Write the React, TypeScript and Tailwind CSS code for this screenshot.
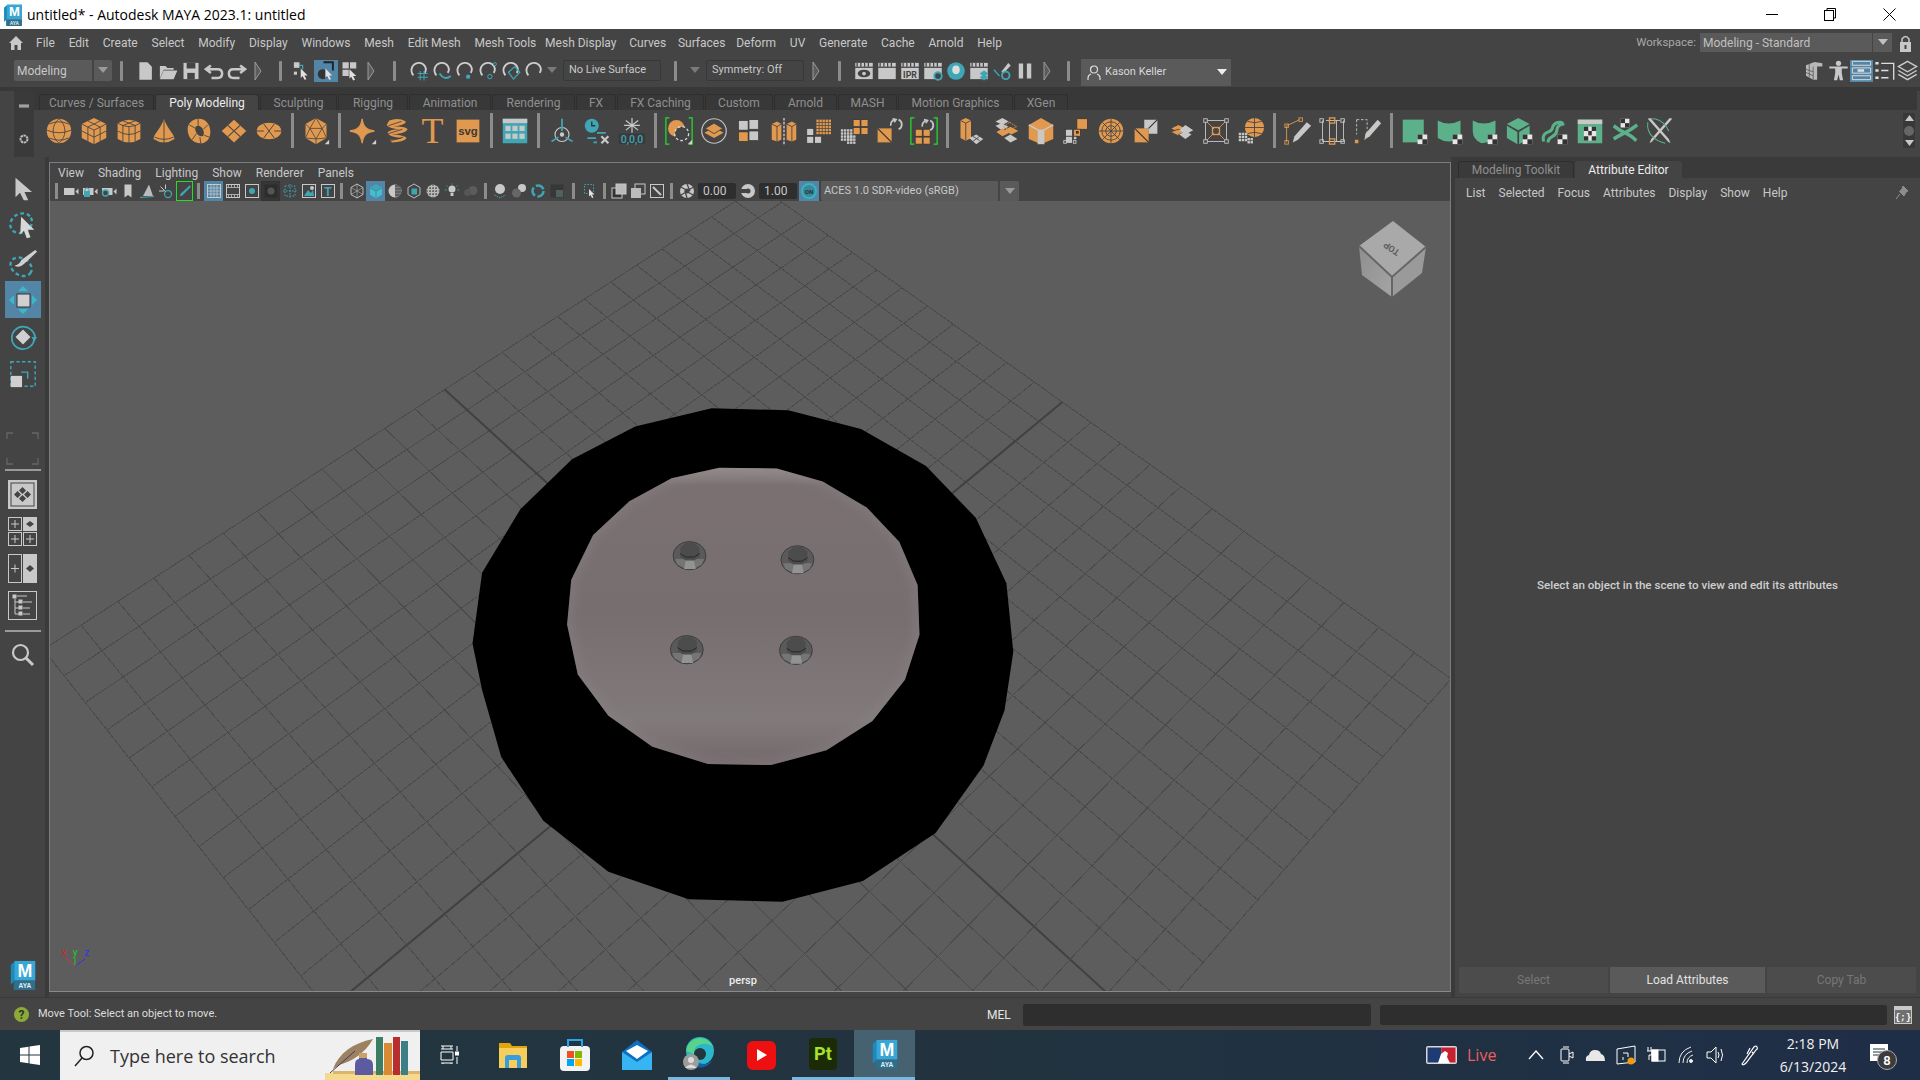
import React from "react";

const O = "#e0994f";
const D = "#444444";
const T = "#3fa6b6";
const G = "#c8c8c8";
const V = "#5cb18b";
const NG = "#22e02a";

const I = ({ s = 28, children }: { s?: number; children: React.ReactNode }) => (
  <svg width={s} height={s} viewBox="0 0 32 32" fill="none">{children}</svg>
);
const Corner = () => <path d="M31 31V26L26 31Z" fill="#d0d0d0" />;
const Brk = () => <path d="M5 1H1V31H5M27 1H31V31H27" stroke={NG} strokeWidth="1.4" />;
const Sq = ({ x, y, w, c = O }: { x: number; y: number; w: number; c?: string }) => <rect x={x} y={y} width={w} height={w} fill={c} stroke="#333" strokeWidth=".8" />;
const FineGrid = ({ x, y, n, c }: { x: number; y: number; n: number; c: string }) => (
  <g>{Array.from({ length: n * n }).map((_, i) => <rect key={i} x={x + (i % n) * 3.5} y={y + Math.floor(i / n) * 3.5} width="2.7" height="2.7" fill={c} />)}</g>
);
const Arrows = ({ x = 0, y = 0 }: { x?: number; y?: number }) => (
  <g transform={`translate(${x} ${y})`} stroke="#c8c8c8" strokeWidth="2"><path d="M3 9A6 6 0 0 1 8 2" /><path d="M12 2A6 6 0 0 1 12 13" /><path d="M5 1L9 2 7 5" /></g>
);
const Chk = ({ x, y }: { x: number; y: number }) => (
  <g transform={`translate(${x} ${y})`}><rect width="11" height="11" fill="#e6e6e6" /><rect width="5.5" height="5.5" fill="#333" /><rect x="5.5" y="5.5" width="5.5" height="5.5" fill="#333" /></g>
);

const shelfA: React.ReactNode[] = [
  <I key="a"><circle cx="16" cy="16" r="14" fill={O} /><path d="M5 8Q16 3 27 8M2 15Q16 21 30 15M5 24Q16 29 27 24M16 2C7 9 7 23 16 30M16 2C25 9 25 23 16 30" stroke={D} strokeWidth="1" /></I>,
  <I key="b"><path d="M16 1L30 8V24L16 31 2 24V8Z" fill={O} /><path d="M2 8L16 15 30 8M16 15V31M9 4.500L23 11.500M23 4.500L9 11.500M9 11.500V28M23 11.500V28M2 16L16 23 30 16" stroke={D} strokeWidth="1" /></I>,
  <I key="c"><path d="M3 7Q16 -1 29 7V25Q16 33 3 25Z" fill={O} /><path d="M3 7Q16 15 29 7M3 16Q16 24 29 16M16 11V30M9 10V28M23 10V28M8 4L24 10M24 4L8 10" stroke={D} strokeWidth="1" /></I>,
  <I key="d"><path d="M16 2C12 14 4 20 4 25Q16 33 28 25C28 20 20 14 16 2Z" fill={O} /><path d="M16 2V31M5 23Q16 28 27 23" stroke={D} strokeWidth="1" /></I>,
  <I key="e"><path fillRule="evenodd" d="M16 2C24 2 29 9 29 17 29 25 24 30 18 30 9 30 3 23 3 14 3 7 9 2 16 2ZM15 10C11 10 11 14 13 18 15 22 19 23 21 21 23 18 20 10 15 10Z" fill={O} /><path d="M5 9L12 13M15 2L15 10M26 9L21 14M22 21L28 23M13 19L8 26M17 23L18 30" stroke={D} strokeWidth="1" /></I>,
  <I key="f"><path d="M16 3L30 16 16 29 2 16Z" fill={O} /><path d="M9 9.500L23 22.500M23 9.500L9 22.500" stroke={D} strokeWidth="1.2" /></I>,
  <I key="g"><ellipse cx="16" cy="16" rx="14" ry="9.500" fill={O} /><path d="M2 16H10M22 16H30M10 8L22 24M22 8L10 24" stroke={D} strokeWidth="1.100" /></I>,
];
const shelfB = <I key="h"><path d="M16 1L28 8V24L16 31 4 24V8Z" fill={O} /><path d="M16 1L9 13 4 8M16 1L23 13 28 8M9 13H23L16 25ZM9 13L4 24M23 13L28 24M16 25V31M16 25L4 24M16 25L28 24" stroke={D} strokeWidth=".9" /><Corner /></I>;
const shelfC: React.ReactNode[] = [
  <I key="i"><path d="M15 2C16 11 20 15 29 16 20 17 16 21 15 30 14 21 10 17 1 16 10 15 14 11 15 2Z" fill={O} stroke={O} strokeWidth="1.500" /><Corner /></I>,
  <I key="j"><path d="M6 4Q16 0 25 5 25 9 10 11 24 10 27 14 25 19 9 20 22 20 26 24 22 29 9 29L7 26Q20 26 20 24 6 23 4 18 6 14 18 14 5 13 3 9Z" fill={O} /><path d="M5 10L20 5M5 19L21 14M8 27L22 23" stroke={D} strokeWidth="1" /></I>,
  <span key="k" className="font-['Liberation_Serif',serif] text-[36px] leading-[30px] text-[#e0994f]">T</span>,
  <I key="l"><rect x="3" y="3" width="26" height="26" fill={O} /><text x="16" y="21" textAnchor="middle" fontFamily="Liberation Sans" fontWeight="700" fontSize="13" fill="#3a3a3a">svg</text></I>,
];
const shelfD = <I key="m"><rect x="2" y="2" width="28" height="28" fill={T} /><rect x="2" y="2" width="28" height="5" fill={G} /><g fill={G}><rect x="5" y="10" width="6" height="6" /><rect x="13" y="10" width="6" height="6" /><rect x="21" y="10" width="6" height="6" /><rect x="5" y="19" width="6" height="6" /><rect x="13" y="19" width="6" height="6" /><rect x="21" y="19" width="6" height="6" /></g></I>;
const shelfE: React.ReactNode[] = [
  <I key="n"><circle cx="16" cy="20" r="8" stroke={G} strokeWidth="1.300" /><path d="M16 2V16M4 28L12 23M28 28L20 23" stroke={T} strokeWidth="2" /><circle cx="16" cy="20" r="2.500" fill={G} /></I>,
  <I key="o"><circle cx="10" cy="10" r="8" fill={T} /><path d="M10 5V10H14" stroke="#333" strokeWidth="1.500" /><path d="M16 18H26M5 24H15M12 29H16" stroke={T} strokeWidth="2" /><path d="M21 22L29 30M29 22L21 30" stroke={G} strokeWidth="2.500" /></I>,
  <I key="p"><path d="M16 1V18M9 4L23 15M23 4L9 15M7 9.500H25" stroke={G} strokeWidth="1.400" /><rect x="1" y="19" width="30" height="12" fill="#3a3a3a" /><text x="16" y="30" textAnchor="middle" fontFamily="Roboto" fontWeight="500" fontSize="12" fill={T}>0,0,0</text></I>,
];
const shelfF: React.ReactNode[] = [
  <I key="q"><Brk /><circle cx="13" cy="13" r="9.500" fill={O} /><circle cx="19" cy="19" r="8" fill="#444" stroke="#ddd" strokeWidth="1.500" strokeDasharray="3 2.500" /><Corner /></I>,
  <I key="r"><circle cx="16" cy="16" r="14" stroke="#c0c0c0" strokeWidth="1.400" /><path d="M16 12L27 18 16 24 5 18Z" fill={O} /><path d="M16 7L26 13 16 19 6 13Z" fill={O} stroke="#444" /></I>,
  <I key="s"><Sq x={4} y={17} w={11} /><Sq x={16} y={3} w={11} c={G} /><Sq x={16} y={16} w={11} c={G} /><Sq x={4} y={4} w={11} c={G} /></I>,
  <I key="t"><path d="M2 8L8 5 13 8V26L8 28 2 26Z" fill={O} /><path d="M19 8L25 5 30 8V26L25 28 19 26Z" fill={O} /><path d="M2 8L8 11 13 8M8 11V28M19 8L25 11 30 8M25 11V28" stroke="#444" /><path d="M16 1V31" stroke="#ddd" strokeWidth="1.400" strokeDasharray="3 1.500" /></I>,
  <I key="u"><Sq x={2} y={13} w={8} c={G} /><Sq x={11} y={22} w={8} c={G} /><Sq x={2} y={22} w={8} c={G} /><FineGrid x={13} y={3} n={5} c={O} /></I>,
  <I key="v"><Sq x={15} y={3} w={8} /><Sq x={24} y={3} w={8} /><Sq x={15} y={12} w={8} /><Sq x={24} y={12} w={8} /><FineGrid x={1} y={14} n={4} c={G} /><FineGrid x={8} y={21} n={3} c={G} /></I>,
  <I key="w"><path d="M3 13H19V29H3Z" fill={O} /><path d="M3 13L19 29" stroke="#333" strokeWidth="1.500" /><Arrows x={15} y={1} /></I>,
  <I key="x"><Brk /><Sq x={6} y={14} w={8} /><Sq x={15} y={14} w={8} /><Sq x={6} y={23} w={8} /><Sq x={15} y={23} w={8} /><Arrows x={11} y={2} /></I>,
];
const shelfG: React.ReactNode[] = [
  <I key="a1"><path d="M4 4L10 1 16 4V24L10 27 4 24Z" fill={O} /><path d="M4 4L10 7 16 4M10 7V27" stroke="#444" /><path d="M14 24L22 20 30 25 22 31Z" fill={G} /><path d="M18 22L26 27M26 22L18 28" stroke="#444" /></I>,
  <I key="a2"><path d="M12 1L19 5 12 9 4 5Z" fill={G} /><path d="M4 10L11 7 19 11 11 15Z" fill={G} /><path d="M20 6L28 11 20 15 13 11Z" fill="none" stroke={O} strokeDasharray="2 1" /><path d="M14 15L21 11 30 16 22 20Z" fill={O} /><path d="M5 17L12 13 20 18 12 22Z" fill={O} /><path d="M14 24L21 20 29 25 21 29Z" fill={G} /></I>,
  <I key="a3"><path d="M16 1L30 9V25L16 31 2 25V9Z" fill={O} /><path d="M2 9L13 15V31M30 9L19 15V31M13 15H19" stroke={G} strokeWidth="1.600" /><path d="M13 15H19V31H13Z" fill={G} /></I>,
  <I key="a4"><Sq x={17} y={2} w={12} /><Sq x={13} y={14} w={8} /><Sq x={4} y={14} w={8} c={G} /><Sq x={4} y={22} w={8} c={G} /><Sq x={13} y={22} w={4} c={G} /><rect x="16" y="16" width="3" height="3" fill="#333" /><rect x="2" y="27" width="3" height="3" stroke={G} /><rect x="13" y="27" width="3" height="3" stroke={G} /></I>,
  <I key="a5"><circle cx="16" cy="16" r="14" fill={O} /><circle cx="16" cy="16" r="6" stroke={D} /><circle cx="16" cy="16" r="10.500" stroke={D} /><path d="M2 16H30M16 2V30M6 6L26 26M26 6L6 26" stroke={D} /></I>,
  <I key="a6"><path d="M3 13H19V29H3Z" fill={O} /><path d="M14 3H29V19H19V13H14Z" fill={G} /><path d="M3 13L19 29M19 13L29 3" stroke="#333" strokeWidth="1.300" /></I>,
  <I key="a7"><path d="M13 9L21 13 13 17 5 13Z" fill={O} /><path d="M13 14L20 17 12 21 4 17Z" fill={O} stroke="#444" /><path d="M21 9L30 15 21 20 14 15Z" fill={G} /><path d="M14 20L21 16 28 20 21 25Z" fill={G} /></I>,
  <I key="a8"><rect x="4" y="4" width="24" height="24" stroke={G} /><path d="M4 4L14 14M28 4L18 14M4 28L14 18M28 28L18 18" stroke={O} /><rect x="12" y="12" width="8" height="8" stroke={O} strokeWidth="1.500" /><g fill="#444" stroke={G}><rect x="2" y="2" width="4" height="4" /><rect x="26" y="2" width="4" height="4" /><rect x="2" y="26" width="4" height="4" /><rect x="26" y="26" width="4" height="4" /></g></I>,
  <I key="a9"><circle cx="20" cy="12" r="11" fill={O} /><path d="M9 12H31M20 1V23M12 5Q20 8 28 5M12 19Q20 16 28 19" stroke={D} /><FineGrid x={2} y={18} n={3} c={G} /><FineGrid x={12} y={24} n={2} c={G} /></I>,
];
const Pen = ({ x = 0, y = 0 }: { x?: number; y?: number }) => <g transform={`translate(${x} ${y})`}><path d="M21 1L26 5 11 21 5 24 7 17Z" fill={G} /></g>;
const shelfH: React.ReactNode[] = [
  <I key="b1"><Pen x={5} y={5} /><path d="M3 10L18 3M3 10V29" stroke={O} /><rect x="1" y="8" width="4" height="4" stroke={O} /><rect x="17" y="1" width="4" height="4" stroke={O} /><rect x="1" y="27" width="4" height="4" stroke={O} /></I>,
  <I key="b2"><path d="M4 4V28H28M28 28V4" stroke={G} /><path d="M8 4H24M8 28H24" stroke={G} /><path d="M12 4V28M20 4V28" stroke={G} /><rect x="1" y="2" width="4" height="4" stroke={G} /><rect x="12" y="1" width="6" height="6" stroke={O} strokeWidth="1.500" /><rect x="25" y="2" width="4" height="4" stroke={G} /><rect x="1" y="26" width="4" height="4" stroke={G} /><rect x="12" y="25" width="6" height="6" stroke={O} strokeWidth="1.500" /><rect x="25" y="26" width="4" height="4" stroke={G} /></I>,
  <I key="b3"><path d="M3 3H15V20" stroke={G} strokeDasharray="3 2" /><path d="M3 3V20" stroke={G} strokeDasharray="3 2" /><rect x="1" y="26" width="4" height="4" fill={O} /><path d="M27 3L31 7 18 22 12 26 13 19Z" fill={G} /><path d="M12 26L15 23" stroke={O} /></I>,
];
const Checked = ({ d }: { d: React.ReactNode }) => <I>{d}<Chk x={19} y={20} /></I>;
const shelfI: React.ReactNode[] = [
  <Checked key="c1" d={<rect x="2" y="3" width="24" height="26" fill={V} />} />,
  <Checked key="c2" d={<path d="M2 4Q14 11 28 4V24Q14 32 2 24Z" fill={V} />} />,
  <Checked key="c3" d={<path d="M2 4Q14 11 28 4V18Q24 30 12 30 2 26 2 16Z" fill={V} />} />,
  <Checked key="c4" d={<g><path d="M14 1L27 8 14 15 1 8Z" fill={V} /><path d="M1 10L13 17V31L1 24ZM15 17L27 10V24L15 31Z" fill={V} /></g>} />,
  <Checked key="c5" d={<path d="M3 28C0 15 12 19 13 13 14 6 24 4 25 8 20 9 18 11 18 16 17 24 8 21 8 29M8 29" stroke={V} strokeWidth="3.500" />} />,
  <I key="c6"><rect x="2" y="3" width="28" height="27" fill={V} /><rect x="2" y="3" width="28" height="5" fill={G} /><g transform="translate(9 11)"><rect width="14" height="16" fill="#e6e6e6" /><rect width="5" height="5" fill="#333" /><rect x="9" width="5" height="5" fill="#333" /><rect x="5" y="5" width="4" height="5" fill="#333" /><rect y="11" width="5" height="5" fill="#333" /><rect x="9" y="11" width="5" height="5" fill="#333" /></g></I>,
  <I key="c7"><path d="M3 10L10 15 16 18 23 14 30 9M3 25L10 21 16 18 23 22 29 27" stroke={V} strokeWidth="4" /><g transform="translate(11 2)"><rect width="10" height="10" fill="#e6e6e6" /><rect width="5" height="5" fill="#333" /><rect x="5" y="5" width="5" height="5" fill="#333" /></g></I>,
  <I key="c8"><path d="M30 2L7 28 4 30 6 25 27 1Z" fill={G} /><path d="M2 2L25 28 28 30 26 25 5 1Z" fill={G} /><path d="M2 6C0 22 14 28 22 30M6 2C16 1 24 10 26 16" stroke={V} strokeWidth="1.200" /></I>,
];

const Sep = () => (
  <div className="w-[12px] flex justify-center shrink-0"><div className="w-[3px] h-[35px] bg-[#8c8c8c]" /></div>
);
const Cell = ({ n }: { n: React.ReactNode }) => <div className="w-[35px] h-[36px] flex items-center justify-center shrink-0">{n}</div>;

const Menu = ({ items, cls }: { items: string[]; cls: string }) => (
  <div className={cls}>{items.map((m) => <span key={m} className="whitespace-nowrap">{m}</span>)}</div>
);

const Bar = () => <div className="w-[3px] h-[20px] bg-[#8c8c8c] rounded-[1px] shrink-0" />;
const Coll = () => <svg width="8" height="20" viewBox="0 0 8 20"><path d="M1 1L7 10 1 19Z" fill="#5c5c5c" stroke="#999" strokeWidth="1" /></svg>;
const Tri = ({ c = "#9a9a9a" }: { c?: string }) => <svg width="10" height="7" viewBox="0 0 10 7"><path d="M0 0H10L5 6Z" fill={c} /></svg>;
const S = ({ w, children, hl }: { w: string; children?: React.ReactNode; hl?: boolean }) => (
  <div className={`${w} h-[22px] flex items-center justify-center shrink-0 ${hl ? "bg-[#5285a6]" : ""}`}>{children}</div>
);
const ic = (c: React.ReactNode, key: string, s = 20) => <I s={s} key={key}>{c}</I>;

const Clap = ({ children }: { children?: React.ReactNode }) => (
  <I s={20}><rect x="2" y="3" width="28" height="6" fill={G} /><path d="M5 3V9M11 3V9M17 3V9M23 3V9" stroke="#444" strokeWidth="2" /><rect x="2" y="11" width="28" height="18" fill={G} />{children}</I>
);

const statusA = [
  ic(<path d="M7 2H20L27 9V30H7Z" fill={G} />, "new"),
  ic(<path d="M3 8H12L15 11H25V14H9L3 28ZM9 15H31L25 29H3Z" fill={G} />, "open"),
  ic(<g><path d="M4 3H28V29H4Z" fill={G} /><rect x="9" y="3" width="14" height="9" fill="#444" /><rect x="10" y="19" width="12" height="10" fill="#444" /></g>, "save"),
  ic(<path d="M11 7L3 13 11 19M4 13H22Q29 13 29 20T22 27H12" stroke={G} strokeWidth="4" />, "undo"),
  ic(<path d="M21 7L29 13 21 19M28 13H10Q3 13 3 20T10 27H20" stroke={G} strokeWidth="4" />, "redo"),
];
const Ptr = ({ x, y }: { x: number; y: number }) => <path transform={`translate(${x} ${y})`} d="M0 0L11 11H6L9 17 6 18 3 12 0 15Z" fill="#e0e0e0" />;
const statusB = [
  <S w="w-[24px]" key="1">{ic(<g><rect x="3" y="2" width="9" height="9" fill={G} /><rect x="3" y="17" width="5" height="5" fill={G} /><path d="M12 7H17V13" stroke={T} strokeWidth="2" /><Ptr x={14} y={12} /></g>, "x")}</S>,
  <S w="w-[24px]" key="2" hl>{ic(<g><path d="M12 2H27V15" stroke="#222" strokeWidth="3" /><circle cx="11" cy="21" r="8" fill="#333" /><Ptr x={15} y={12} /></g>, "x")}</S>,
  <S w="w-[24px]" key="3">{ic(<g><rect x="4" y="2" width="10" height="10" fill={G} /><rect x="16" y="2" width="10" height="10" fill={G} /><rect x="4" y="14" width="10" height="10" fill={G} /><Ptr x={15} y={13} /></g>, "x")}</S>,
];
const Snap = ({ extra }: { extra: React.ReactNode }) => (
  <I s={20}><path d="M7 23C0 14 6 4 15 3 24 2 30 12 25 19" stroke="#ccc" strokeWidth="3" />{extra}</I>
);
const snaps = [
  <path key="g" d="M14 20H30M14 26H30M18 16V31M24 16V31" stroke={T} strokeWidth="1.600" />,
  <path key="c" d="M12 20Q20 32 30 24" stroke={T} strokeWidth="3" />,
  <circle key="p" cx="21" cy="25" r="3.500" fill={T} />,
  <g key="v"><circle cx="19" cy="25" r="3.500" stroke={T} strokeWidth="1.600" /><circle cx="27" cy="5" r="2.500" stroke={T} strokeWidth="1.500" /></g>,
  <path key="s" d="M12 18L22 9 30 18 20 29Z" stroke={T} strokeWidth="2" />,
  null,
];
const renders = [
  <Clap key="1"><ellipse cx="16" cy="20" rx="10" ry="6" fill="#444" /><circle cx="16" cy="20" r="3" fill={G} /></Clap>,
  <Clap key="2" />,
  <Clap key="3"><text x="16" y="27" textAnchor="middle" fontFamily="Roboto" fontWeight="700" fontSize="14" fill="#444">IPR</text></Clap>,
  <Clap key="4"><circle cx="24" cy="24" r="6" fill="#444" stroke={T} strokeWidth="3" /></Clap>,
  <I s={20} key="5"><circle cx="16" cy="16" r="14" fill={T} /><ellipse cx="16" cy="14" rx="6" ry="7" fill="#ddd" /></I>,
  <Clap key="6"><path d="M24 15L31 20 24 25 17 20Z" fill={T} /><path d="M24 21L31 26 24 31 17 26Z" fill={T} /></Clap>,
  <I s={20} key="7"><path d="M15 17L26 3 30 7 18 20Z" fill={G} /><circle cx="22" cy="23" r="6" stroke={T} strokeWidth="3" /><path d="M3 14L12 24" stroke={T} strokeWidth="2" /></I>,
  <I s={20} key="8"><rect x="6" y="4" width="7" height="24" fill={G} /><rect x="19" y="4" width="7" height="24" fill={G} /></I>,
];

const V16 = ({ children, s = 16 }: { children: React.ReactNode; s?: number }) => <svg width={s} height={s} viewBox="0 0 32 32" fill="none">{children}</svg>;
const VC = ({ children, hl, box }: { children?: React.ReactNode; hl?: boolean; box?: boolean }) => (
  <div className={`w-[19px] h-[20px] flex items-center justify-center shrink-0 ${hl ? "bg-[#5285a6]" : ""} ${box ? "border border-[#333] bg-[#363636]" : ""}`}>{children}</div>
);
const VSep = ({ w }: { w: string }) => <div className={`${w} flex justify-center shrink-0`}><div className="w-[3px] h-[16px] bg-[#8c8c8c]" /></div>;
const Sqr = ({ children }: { children: React.ReactNode }) => <V16><rect x="3" y="3" width="26" height="26" stroke={G} strokeWidth="2" />{children}</V16>;
const Cam = ({ extra }: { extra?: React.ReactNode }) => <V16><rect x="2" y="10" width="21" height="14" fill={G} /><path d="M25 17L31 11V23Z" fill={G} />{extra}</V16>;

const vA = [
  <VC key="1"><Cam /></VC>,
  <VC key="2"><Cam extra={<g><rect x="4" y="16" width="12" height="12" fill={T} /><path d="M6 16V12Q10 7 14 12V16" stroke={T} strokeWidth="2" /></g>} /></VC>,
  <VC key="3"><Cam extra={<circle cx="9" cy="20" r="6" fill="#444" stroke={T} strokeWidth="3" />} /></VC>,
  <VC key="4"><V16><path d="M9 3H23V29L16 24 9 29Z" fill={G} /></V16></VC>,
  <VC key="5"><V16><path d="M20 3L8 26H28Z" fill="#bbb" /><path d="M2 29L30 27" stroke={T} strokeWidth="2" /></V16></VC>,
  <VC key="6"><V16><circle cx="20" cy="22" r="7" stroke={T} strokeWidth="2.500" /><path d="M15 17L5 7M15 3V12M2 16H12" stroke={G} strokeWidth="2" /></V16></VC>,
  <VC key="7"><div className="w-[17px] h-[20px] border border-[#22e02a] flex items-center justify-center"><V16 s={14}><path d="M27 3L29 7 10 26 4 28 6 22Z" fill={T} /></V16></div></VC>,
];
const vB = [
  <VC key="1" hl><Sqr><path d="M10 3V29M16 3V29M22 3V29M3 10H29M3 16H29M3 22H29" stroke={G} strokeWidth="1.500" /></Sqr></VC>,
  <VC key="2"><Sqr><path d="M3 9H29M3 23H29M7 3V9M13 3V9M19 3V9M25 3V9M7 23V29M13 23V29M19 23V29M25 23V29" stroke={G} strokeWidth="1.500" /></Sqr></VC>,
  <VC key="3"><Sqr><circle cx="16" cy="16" r="6" fill={T} /></Sqr></VC>,
  <VC key="4" box><V16><rect x="3" y="3" width="26" height="26" fill="#2d2d2d" /><circle cx="16" cy="16" r="7" fill="#555" /></V16></VC>,
  <VC key="5"><V16><rect x="6" y="6" width="20" height="20" stroke={T} strokeWidth="2" strokeDasharray="3 3" /><path d="M2 16H30M16 2V30" stroke={T} strokeWidth="2" strokeDasharray="3 3" /></V16></VC>,
  <VC key="6"><Sqr><path d="M6 26L14 14 20 20 24 14 26 26Z" fill={T} /><circle cx="22" cy="10" r="4" fill="#c8c8c8" /></Sqr></VC>,
  <VC key="7"><Sqr><text x="16" y="26" textAnchor="middle" fontFamily="Liberation Sans" fontWeight="700" fontSize="24" fill={T}>T</text></Sqr></VC>,
];
const vC = [
  <VC key="1"><V16><path d="M16 2L28 9V23L16 30 4 23V9Z" stroke={G} strokeWidth="1.800" /><path d="M4 9L16 16 28 9M16 16V30M16 2V16M4 23L16 16 28 23" stroke={G} strokeWidth="1" /></V16></VC>,
  <VC key="2" hl><V16><path d="M16 2L28 9 16 16 4 9Z" fill={T} /><path d="M4 11L15 17V30L4 23ZM28 11L17 17V30L28 23Z" fill="#44bfd2" /></V16></VC>,
  <VC key="3"><V16><circle cx="16" cy="16" r="13" fill={G} /><path d="M16 3A13 13 0 0 1 16 29Z" fill="#7b7b7b" /><path d="M16 6H29M16 12H29M16 18H29M16 24H29" stroke="#444" strokeWidth="2" /></V16></VC>,
  <VC key="4"><V16><path d="M16 2L28 9V23L16 30 4 23V9Z" stroke={G} strokeWidth="1.800" /><rect x="11" y="11" width="11" height="12" fill={T} /></V16></VC>,
  <VC key="5"><V16><circle cx="16" cy="16" r="13" fill="#bbb" /><path d="M3 10H29M3 16H29M3 22H29M10 3V29M16 3V29M22 3V29" stroke="#444" strokeWidth="2" strokeDasharray="3 3" /></V16></VC>,
  <VC key="6"><V16><circle cx="16" cy="12" r="7" fill={G} /><rect x="13" y="20" width="6" height="6" fill={G} /><path d="M16 1V3M5 5L7 7M27 5L25 7M2 14H5M27 14H30" stroke={T} strokeWidth="2" /></V16></VC>,
  <VC key="7"><V16><circle cx="20" cy="15" r="9" fill="#5c5c5c" /><circle cx="9" cy="19" r="7" fill="#565656" /></V16></VC>,
];
const vD = [
  <VC key="1"><V16><circle cx="16" cy="12" r="10" fill={G} /><path d="M5 24L16 30 27 24" stroke={T} strokeWidth="2" strokeDasharray="3 2" /></V16></VC>,
  <VC key="2"><V16><circle cx="22" cy="10" r="8" fill={G} /><circle cx="11" cy="20" r="9" fill="#666" /></V16></VC>,
  <VC key="3"><V16><circle cx="16" cy="16" r="11" stroke={T} strokeWidth="5" strokeDasharray="18 5" /></V16></VC>,
  <VC key="4"><V16><rect x="3" y="3" width="26" height="26" fill="#373737" /><rect x="14" y="14" width="14" height="14" fill="#4f5f62" /></V16></VC>,
];
const vE = [
  <VC key="1"><V16><rect x="5" y="3" width="18" height="18" stroke={T} strokeWidth="2" strokeDasharray="3 3" /><Ptr x={14} y={12} /></V16></VC>,
];
const vF = [
  <VC key="1"><V16><rect x="2" y="10" width="20" height="20" fill="#333" stroke={G} strokeWidth="2" /><rect x="10" y="2" width="20" height="20" stroke={G} strokeWidth="2" fill="#bbb" /></V16></VC>,
  <VC key="2"><V16><rect x="10" y="2" width="20" height="20" stroke={G} strokeWidth="2" /><rect x="2" y="10" width="20" height="20" fill="#bbb" /></V16></VC>,
  <VC key="3"><Sqr><path d="M8 8L24 24" stroke={G} strokeWidth="4" /></Sqr></VC>,
];
const Ap = ({ cut }: { cut?: boolean }) => <V16><circle cx="16" cy="16" r="14" fill={G} />{cut ? <rect x="0" y="12" width="14" height="8" fill="#444" /> : <g stroke="#444" strokeWidth="2.500"><path d="M16 2L22 16M28 9L14 16M28 24L14 16M16 30L12 16M4 24L18 16M4 8L18 16" /></g>}<circle cx="16" cy="16" r="5" fill="#444" /></V16>;

const Tool = ({ children, hl, h = "h-[37px]" }: { children: React.ReactNode; hl?: boolean; h?: string }) => (
  <div className={`w-[36px] ${h} flex items-center justify-center shrink-0 ${hl ? "bg-[#5285a6]" : ""}`}>{children}</div>
);

const MayaLogo = ({ s = 30 }: { s?: number }) => (
  <svg width={s} height={s} viewBox="0 0 32 32">
    <path d="M3 5L8 1H29V21L8 21 3 26Z" fill="#1c8abc" />
    <path d="M7 1H29V22H7Z" fill="#38a7d6" />
    <path d="M6 22H29V32H6Z" fill="#2e6f8c" />
    <text x="18" y="18" textAnchor="middle" fontFamily="Liberation Sans" fontWeight="700" fontSize="19" fill="#fff">M</text>
    <text x="18" y="30" textAnchor="middle" fontFamily="Liberation Sans" fontWeight="700" fontSize="7" fill="#e4eef3">AYA</text>
  </svg>
);

function project(u: number, v: number) {
  const [x0, y0] = [759, 186], [x1, y1] = [1451, 678.8], [x2, y2] = [723, 1511.6], [x3, y3] = [43.5, 649.5];
  const dx1 = x1 - x2, dx2 = x3 - x2, sx = x0 - x1 + x2 - x3;
  const dy1 = y1 - y2, dy2 = y3 - y2, sy = y0 - y1 + y2 - y3;
  const den = dx1 * dy2 - dx2 * dy1;
  const g = (sx * dy2 - dx2 * sy) / den, h = (dx1 * sy - sx * dy1) / den;
  const a = x1 - x0 + g * x1, b = x3 - x0 + h * x3, c = x0;
  const d = y1 - y0 + g * y1, e = y3 - y0 + h * y3, f = y0;
  const w = g * u + h * v + 1;
  return [(a * u + b * v + c) / w, (d * u + e * v + f) / w];
}

const gridLines = () => {
  const out: React.ReactNode[] = [];
  for (let i = 0; i <= 24; i++) {
    const t = i / 24;
    const thick = i === 12;
    const [a, b] = project(t, 0), [c, d] = project(t, 1), [e, f] = project(0, t), [g, h] = project(1, t);
    out.push(<line key={`a${i}`} x1={a} y1={b} x2={c} y2={d} stroke={thick ? "#414141" : "#4b4b4b"} strokeWidth={thick ? 2 : 1} shapeRendering={thick ? "auto" : "crispEdges"} />);
    out.push(<line key={`b${i}`} x1={e} y1={f} x2={g} y2={h} stroke={thick ? "#414141" : "#4b4b4b"} strokeWidth={thick ? 2 : 1} shapeRendering={thick ? "auto" : "crispEdges"} />);
  }
  return out;
};

const Stud = ({ x, y }: { x: number; y: number }) => (
  <g transform={`translate(${x} ${y})`}>
    <ellipse rx="43" ry="41" fill="#5a5a5a" stroke="#3a3a3a" strokeWidth="2.500" />
    <path d="M-38 10L-10 10 -12 37 -32 26ZM38 10L12 10 14 37 32 26Z" fill="#757575" />
    <path d="M-10 12H12L16 39H-14Z" fill="#939393" />
    <path d="M-24 -24L-10 -38H12L26 -24V4L12 14H-10L-24 4Z" fill="#4c4c4c" />
    <path d="M-24 -6L-10 4H12L26 -6" stroke="#222" strokeWidth="2.500" fill="none" />
  </g>
);

const DISK = "730,255 880,257 1000,295 1115,370 1200,470 1248,595 1253,740 1215,870 1130,990 1010,1075 865,1118 700,1115 555,1065 440,975 360,855 332,710 343,580 400,450 495,352 605,285";

const Viewport = () => (
  <svg width="1400" height="790" viewBox="50 201 1400 790" className="block">
    <defs>
      <linearGradient id="disk" x1="0" y1="0" x2="0" y2="1">
        <stop offset="0" stopColor="#948c8c" />
        <stop offset=".06" stopColor="#7a7072" />
        <stop offset=".5" stopColor="#776e70" />
        <stop offset=".85" stopColor="#817a7b" />
        <stop offset="1" stopColor="#73686b" />
      </linearGradient>
      <linearGradient id="cubeL" x1="0" y1="0" x2="1" y2="1">
        <stop offset="0" stopColor="#8e8e8e" /><stop offset="1" stopColor="#a5a5a5" />
      </linearGradient>
      <filter id="soft" x="-10%" y="-10%" width="120%" height="120%"><feGaussianBlur stdDeviation="14" /></filter>
      <clipPath id="diskClip"><polygon points={DISK} /></clipPath>
    </defs>
    <rect x="50" y="201" width="1400" height="790" fill="#5d5d5d" />
    {gridLines()}
    <g transform="translate(440 380) scale(.3827 .3444)">
      <polygon fill="#000" points="710,82 910,88 1100,142 1270,250 1400,400 1480,590 1498,790 1475,960 1420,1120 1295,1315 1105,1455 895,1515 650,1508 440,1428 270,1280 160,1095 110,900 85,765 110,560 210,375 345,230 510,135" />
      <polygon fill="url(#disk)" points={DISK} />
      <g clipPath="url(#diskClip)"><polygon points={DISK} fill="none" stroke="#8d8586" strokeOpacity=".55" strokeWidth="18" filter="url(#soft)" /></g>
      <Stud x={652} y={510} />
      <Stud x={934} y={522} />
      <Stud x={645} y={783} />
      <Stud x={930} y={785} />
    </g>
    <polygon points="1393,221 1426,247 1392,277 1359,246" fill="#a9a9a9" />
    <polygon points="1359,246 1392,277 1392,297 1362,275" fill="url(#cubeL)" />
    <polygon points="1426,247 1392,277 1392,297 1422,273" fill="#9a9a9a" />
    <path d="M1359 246L1392 277 1426 247M1392 277V297" stroke="#666" strokeWidth="2" fill="none" />
    <text x="1392" y="248" textAnchor="middle" dominantBaseline="middle" transform="rotate(215 1392 248)" fontFamily="Roboto" fontWeight="700" fontSize="9" fill="#606060">TOP</text>
    <path d="M75 966L66 958" stroke="#d33" />
    <path d="M75 966V958" stroke="#2c2" />
    <path d="M75 966L85 959" stroke="#33e" />
    <text x="64" y="956" textAnchor="middle" fontFamily="Roboto" fontSize="10" fill="#d22">x</text>
    <text x="75" y="956" textAnchor="middle" fontFamily="Roboto" fontSize="10" fill="#2c2">y</text>
    <text x="87" y="956" textAnchor="middle" fontFamily="Roboto" fontSize="10" fill="#33e">z</text>
    <text x="743" y="984" textAnchor="middle" fontFamily="Roboto" fontWeight="500" fontSize="11" fill="#eee">persp</text>
  </svg>
);

const mainMenu: [string, string][] = [["File", ""], ["Edit", ""], ["Create", ""], ["Select", ""], ["Modify", ""], ["Display", ""], ["Windows", ""], ["Mesh", ""], ["Edit Mesh", ""], ["Mesh Tools", "mr-[-5px]"], ["Mesh Display", "mr-[-1px]"], ["Curves", "mr-[-2px]"], ["Surfaces", "mr-[-3px]"], ["Deform", ""], ["UV", ""], ["Generate", ""], ["Cache", ""], ["Arnold", ""], ["Help", ""]];

export default function App() {
  return (
    <div className="w-[1920px] h-[1080px] overflow-hidden flex flex-col font-['Roboto',sans-serif] bg-[#444444] text-[12px] text-[#c8c8c8]">
      {/* Title bar */}
      <div className="h-[29px] bg-white flex items-center shrink-0 text-black">
        <div className="ml-[2px] w-[22px] flex justify-center"><MayaLogo s={22} /></div>
        <span className="ml-[3px] text-[14px] font-['Open_Sans',sans-serif] whitespace-nowrap">untitled* - Autodesk MAYA 2023.1: untitled</span>
        <div className="ml-auto flex items-center">
          <div className="w-[58px] flex justify-center"><div className="w-[12px] h-[1px] bg-black" /></div>
          <div className="w-[58px] flex justify-center">
            <svg width="12" height="13" viewBox="0 0 12 13" fill="none" stroke="#000"><path d="M3 2.500V.5H11.500V10H9.500" /><rect x=".5" y="2.500" width="9" height="10" /></svg>
          </div>
          <div className="w-[61px] flex justify-center">
            <svg width="13" height="13" viewBox="0 0 13 13" stroke="#000"><path d="M.5.5L12.500 12.500M12.500.5L.5 12.500" /></svg>
          </div>
        </div>
      </div>

      {/* Menu bar */}
      <div className="h-[27px] flex items-center shrink-0 pl-[8px] pr-[8px]">
        <svg width="16" height="16" viewBox="0 0 16 16"><path d="M8 1L1 8H3V15H6.500V10H9.500V15H13V8H15Z" fill="#c8c8c8" /></svg>
        <div className="flex ml-[12px] gap-[13.800px] text-[12px]">
          {mainMenu.map(([m, c]) => <span key={m} className={`whitespace-nowrap ${c}`}>{m}</span>)}
        </div>
        <div className="ml-auto flex items-center">
          <span className="text-[#a8a8a8] mr-[4px] text-[11.500px]">Workspace:</span>
          <div className="w-[172px] h-[19px] bg-[#5a5a5a] text-[#c0c0c0] pl-[3px] flex items-center mr-[1px]">Modeling - Standard</div>
          <div className="w-[19px] h-[19px] bg-[#5a5a5a] flex items-center justify-center"><Tri c="#c0c0c0" /></div>
          <div className="w-[20px] flex justify-end">
            <svg width="13" height="18" viewBox="0 0 13 18" fill="none"><path d="M3 8V5Q6.500 0 10 5V8" stroke="#c8c8c8" strokeWidth="1.500" /><rect x="1" y="8" width="11" height="10" fill="#c8c8c8" /><rect x="5.500" y="11" width="2" height="4" fill="#444" /></svg>
          </div>
        </div>
      </div>

      {/* Status line */}
      <div className="h-[31px] flex items-center shrink-0 pl-[14px] pb-[2px]">
        <div className="w-[98px] h-[21px] bg-[#5a5a5a] rounded-[2px] flex items-center text-[12px] shrink-0">
          <span className="pl-[3px] w-[78px]">Modeling</span>
          <div className="w-[2px] h-full bg-[#444]" />
          <div className="flex-1 flex justify-center"><Tri /></div>
        </div>
        <div className="ml-[8px]"><Bar /></div>
        <div className="ml-[10px] flex">{statusA.map((n, i) => <S w="w-[23px]" key={i}>{n}</S>)}</div>
        <S w="w-[20px]"><Coll /></S>
        <div className="ml-[11px]"><Bar /></div>
        <div className="ml-[8px] flex">{statusB}</div>
        <S w="w-[18px]"><Coll /></S>
        <div className="ml-[13px]"><Bar /></div>
        <div className="ml-[11px] flex">{snaps.map((e, i) => <S w="w-[23px]" key={i}><Snap extra={e} /></S>)}</div>
        <S w="w-[14px]"><Tri c="#7a7a7a" /></S>
        <div className="ml-[4px] w-[98px] h-[21px] border border-[#383838] rounded-[2px] flex items-center pl-[5px] shrink-0 whitespace-nowrap text-[11px]">No Live Surface</div>
        <div className="ml-[13px]"><Bar /></div>
        <S w="w-[16px] ml-[10px]"><Tri c="#7a7a7a" /></S>
        <div className="ml-[3px] w-[98px] h-[21px] border border-[#383838] rounded-[2px] flex items-center pl-[5px] shrink-0 whitespace-nowrap text-[11px]">Symmetry: Off</div>
        <S w="w-[24px]"><Coll /></S>
        <div className="ml-[10px]"><Bar /></div>
        <div className="ml-[11px] flex">{renders.map((n, i) => <S w="w-[23px]" key={i}>{n}</S>)}</div>
        <S w="w-[22px]"><Coll /></S>
        <div className="ml-[9px]"><Bar /></div>
        <div className="ml-[11px] w-[150px] h-[27px] bg-[#5a5a5a] flex items-center pl-[6px] shrink-0 mt-[4px]">
          <svg width="14" height="15" viewBox="0 0 14 15" fill="none" stroke="#ddd" strokeWidth="1.200"><circle cx="7" cy="4.500" r="3.500" /><path d="M1 15V13Q1 10 4 9M13 15V13Q13 10 10 9" /></svg>
          <span className="ml-[4px] text-[#d8d8d8] whitespace-nowrap text-[11px]">Kason Keller</span>
          <div className="ml-auto mr-[4px]"><Tri c="#eeeeee" /></div>
        </div>
        <div className="ml-auto flex items-center mr-[2px]">
          <S w="w-[24px]"><I s={21}><path d="M3 8L16 3 28 5V10H20V30H14L3 24Z" fill="#b8b8b8" /><path d="M3 14L14 18M3 19L14 24M8 6V26M14 10V30" stroke="#444" /></I></S>
          <S w="w-[24px]"><I s={21}><circle cx="16" cy="5" r="4" fill="#c8c8c8" /><path d="M2 10H30V13H21V20L23 31H18L16 22 14 31H9L11 20V13H2Z" fill="#c8c8c8" /></I></S>
          <S w="w-[23px]" hl><I s={21}><path d="M2 2H30V8H2ZM2 12H30V20H2ZM2 24H30V30H2Z" stroke="#ddd" strokeWidth="1.500" /><rect x="10" y="14" width="10" height="4" fill="#ddd" /></I></S>
          <S w="w-[23px]"><I s={21}><path d="M2 5H7M2 16H7M2 27H7" stroke="#ddd" strokeWidth="4" /><path d="M11 5H30V30M11 16H22M11 27H22" stroke="#ddd" strokeWidth="2" /></I></S>
          <S w="w-[22px]"><I s={21}><path d="M16 2L30 10 16 18 2 10Z" stroke="#ccc" strokeWidth="2" /><path d="M2 16L16 24 30 16M2 22L16 30 30 22" stroke="#ccc" strokeWidth="2" /></I></S>
        </div>
      </div>
      <div className="h-[4px] bg-[#383838] shrink-0" />

      {/* Shelf */}
      <div className="h-[66px] flex shrink-0 pl-[14px]">
        <div className="w-[20px] bg-[#3a3a3a] flex flex-col items-center pt-[13px] shrink-0">
          <div className="w-[10px] h-[4px] bg-[#a0a0a0] border-y border-[#777]" />
          <svg className="mt-[25px]" width="12" height="12" viewBox="0 0 12 12" fill="none"><circle cx="6" cy="6" r="3.500" stroke="#bbb" strokeWidth="2" strokeDasharray="2.500 .6" /></svg>
        </div>
        <div className="flex-1 flex flex-col pr-[3px]">
          <div className="h-[19px] bg-[#383838] flex items-end pl-[5px] gap-[1px] shrink-0 text-[12px] text-[#8f8f8f]">
            {[["Curves / Surfaces", "w-[115px]"], ["Poly Modeling", "w-[104px] bg-[#444444] text-[#ececec]"], ["Sculpting", "w-[77px]"], ["Rigging", "w-[70px]"], ["Animation", "w-[82px]"], ["Rendering", "w-[83px]"], ["FX", "w-[40px]"], ["FX Caching", "w-[87px]"], ["Custom", "w-[68px]"], ["Arnold", "w-[63px]"], ["MASH", "w-[59px]"], ["Motion Graphics", "w-[115px]"], ["XGen", "w-[54px]"]].map(([t, c]) => (
              <div key={t} className={`h-[16px] ${c} border-t border-x border-[#2e2e2e] rounded-t-[3px] flex items-center justify-center whitespace-nowrap shrink-0`}>{t}</div>
            ))}
          </div>
          <div className="h-[47px] flex items-start pl-[7px] pt-[3px]">
            {shelfA.map((n, i) => <Cell key={i} n={n} />)}
            <Sep /><Cell n={shelfB} /><Sep />
            {shelfC.map((n, i) => <Cell key={i} n={n} />)}
            <Sep /><Cell n={shelfD} /><Sep />
            {shelfE.map((n, i) => <Cell key={i} n={n} />)}
            <Sep />
            {shelfF.map((n, i) => <Cell key={i} n={n} />)}
            <Sep />
            {shelfG.map((n, i) => <Cell key={i} n={n} />)}
            <Sep />
            {shelfH.map((n, i) => <Cell key={i} n={n} />)}
            <Sep />
            {shelfI.map((n, i) => <Cell key={i} n={n} />)}
            <div className="ml-auto mr-[2px] w-[12px] h-[35px] bg-[#383838] flex flex-col items-center justify-between py-[2px]">
              <svg width="9" height="6" viewBox="0 0 9 6"><path d="M0 6H9L4.500 0Z" fill="#c8c8c8" /></svg>
              <div className="w-[10px] h-[10px] rounded-full bg-[#666]" />
              <svg width="9" height="6" viewBox="0 0 9 6"><path d="M0 0H9L4.500 6Z" fill="#c8c8c8" /></svg>
            </div>
          </div>
        </div>
      </div>

      {/* Main */}
      <div className="h-[840px] flex shrink-0">
        {/* Toolbox */}
        <div className="w-[45px] h-full flex flex-col items-center pt-[13px] pb-[7px] shrink-0 bg-[#444444]">
          <Tool><I s={24}><path d="M6 1L28 20 18 20 23 31 17 31 12 21 6 27Z" fill="#c8c8c8" /></I></Tool>
          <Tool><I s={30}><ellipse cx="14" cy="13" rx="12" ry="10" transform="rotate(-30 14 13)" stroke={T} strokeWidth="2.500" strokeDasharray="4 3" /><path d="M14 6L28 20 21 20 24 28 20 29 17 21 13 25Z" fill="#d8d8d8" /></I></Tool>
          <Tool><I s={30}><ellipse cx="14" cy="20" rx="12" ry="9" transform="rotate(30 14 20)" stroke={T} strokeWidth="2.500" strokeDasharray="4 3" /><path d="M29 2L31 4 17 17 Q12 22 7 19 13 17 14 13Z" fill="#d0d0d0" /></I></Tool>
          <Tool hl><I s={32}><rect x="10" y="10" width="13" height="13" fill="#d0d0d0" stroke="#333" /><path d="M16 2L21 7H11ZM16 30L21 25H11ZM2 16L7 11V21ZM30 16L25 11V21Z" fill="#3fb6c6" /></I></Tool>
          <Tool><I s={30}><path d="M16 5A12 12 0 1 0 28 18" stroke={T} strokeWidth="1.800" /><path d="M16 5A13 13 0 0 1 29 16" stroke={T} strokeWidth="1.800" /><path d="M25 16H31L28 21Z" fill={T} /><path d="M16 8L24 16 16 24 8 16Z" fill="#d0d0d0" /></I></Tool>
          <Tool><I s={30}><path d="M3 3H29V29H3Z" stroke={T} strokeWidth="1.500" strokeDasharray="3.500 2.500" /><path d="M14 14H21V21" stroke={T} strokeWidth="1.500" /><rect x="3" y="18" width="12" height="12" fill="#d0d0d0" /></I></Tool>
          <div className="h-[38px] shrink-0" />
          <div className="h-[37px] flex items-center"><svg width="33" height="33" viewBox="0 0 33 33" fill="none" stroke="#666" strokeWidth="1.300"><path d="M1 7V1H7M26 1H32V7M1 26V32H7M26 32H32V26" /></svg></div>
          <div className="w-[36px] h-[2px] bg-[#9a9a9a] mt-[2px] mb-[5px] shrink-0" />
          <div className="mt-[3px]"><Tool h="h-[30px]"><svg width="29" height="29" viewBox="0 0 29 29"><rect x="0" y="0" width="29" height="29" fill="#c8c8c8" /><rect x="3" y="3" width="23" height="23" fill="#c8c8c8" stroke="#444" /><path d="M14.500 7L18 10.500 14.500 14 11 10.500ZM14.500 15L18 18.500 14.500 22 11 18.500ZM9.500 11L13 14.500 9.500 18 6 14.500ZM19.500 11L23 14.500 19.500 18 16 14.500Z" fill="#444" /></svg></Tool></div>
          <Tool h="h-[44px]"><svg width="29" height="29" viewBox="0 0 29 29" fill="none" stroke="#c8c8c8"><rect x=".5" y=".5" width="13" height="13" /><rect x="15.500" y=".5" width="13" height="13" fill="#c8c8c8" /><rect x=".5" y="15.500" width="13" height="13" /><rect x="15.500" y="15.500" width="13" height="13" /><path d="M3 7H11M7 3V11M3 22H11M7 18V26M18 22H26M22 18V26" /><path d="M22 4L26 7 22 10 18 7Z" fill="#444" stroke="none" /></svg></Tool>
          <Tool h="h-[30px]"><svg width="29" height="29" viewBox="0 0 29 29" fill="none" stroke="#c8c8c8"><rect x=".5" y=".5" width="13" height="28" /><rect x="15.500" y=".5" width="13" height="28" fill="#c8c8c8" /><path d="M3 14.500H11M7 10.500V18.500" /><path d="M22 11L26 14.500 22 18 18 14.500Z" fill="#444" stroke="none" /></svg></Tool>
          <div className="mt-[7px]"><Tool h="h-[30px]"><svg width="29" height="29" viewBox="0 0 29 29" fill="none" stroke="#c8c8c8"><rect x=".5" y=".5" width="28" height="28" /><rect x="5" y="4" width="3" height="3" fill="#c8c8c8" /><path d="M9 5H19M7 8V23M7 11H11M7 17H11M7 23H11M15 11H24M15 17H22M15 23H22" /><rect x="11" y="9" width="3" height="3" fill="#c8c8c8" /><rect x="11" y="15" width="3" height="3" fill="#c8c8c8" /><rect x="11" y="21" width="3" height="3" fill="#c8c8c8" /></svg></Tool></div>
          <div className="w-[36px] h-[2px] bg-[#9a9a9a] mt-[10px] shrink-0" />
          <Tool h="h-[45px]"><svg width="24" height="24" viewBox="0 0 24 24" fill="none" stroke="#c8c8c8" strokeWidth="2.200"><circle cx="9.500" cy="9.500" r="7.500" /><path d="M15 15L22 22" strokeWidth="3" /></svg></Tool>
          <div className="mt-auto"><MayaLogo s={30} /></div>
        </div>
        <div className="w-[4px] h-full bg-[#3a3a3a] shrink-0" />

        {/* Viewport panel */}
        <div className="w-[1402px] h-[830px] mt-[5px] border border-[#7c7c7c] border-b-[#8a8a8a] flex flex-col shrink-0">
          <div className="h-[38px] shrink-0 flex flex-col">
            <Menu cls="flex pl-[8px] pt-[2px] h-[18px] items-center gap-[14px] text-[12px]" items={["View", "Shading", "Lighting", "Show", "Renderer", "Panels"]} />
            <div className="h-[20px] flex items-center pl-[2px] text-[#c8c8c8]">
              <VSep w="w-[8px]" /><div className="w-[1px]" />
              {vA}
              <VSep w="w-[8px]" /><div className="w-[2px]" />
              {vB}
              <VSep w="w-[8px]" /><div className="w-[2px]" />
              {vC}
              <VSep w="w-[10px]" />
              {vD}
              <VSep w="w-[14px]" />
              {vE}
              <VSep w="w-[10px]" />
              {vF}
              <VSep w="w-[11px]" />
              <VC><Ap /></VC>
              <div className="ml-[2px] w-[38px] h-[16px] bg-[#2e2e2e] rounded-[2px] flex items-center pl-[5px] text-[12px]">0.00</div>
              <div className="ml-[2px]"><VC><Ap cut /></VC></div>
              <div className="ml-[2px] w-[38px] h-[16px] bg-[#2e2e2e] rounded-[2px] flex items-center pl-[5px] text-[12px]">1.00</div>
              <div className="ml-[2px] w-[20px] h-[20px] bg-[#5285a6] flex items-center justify-center">
                <div className="w-[16px] h-[16px] rounded-full border-2 border-[#34b3c2] bg-[#3f8798] flex items-center justify-center text-[6px] font-bold text-[#1e3238]">ON</div>
              </div>
              <div className="ml-[2px] w-[198px] h-[20px] bg-[#5a5a5a] rounded-[2px] flex items-center text-[11px]">
                <span className="pl-[3px] w-[177px] whitespace-nowrap">ACES 1.0 SDR-video (sRGB)</span>
                <div className="w-[2px] h-full bg-[#444]" />
                <div className="flex-1 flex justify-center"><Tri /></div>
              </div>
            </div>
          </div>
          <Viewport />
        </div>
        <div className="w-[4px] h-full bg-[#3a3a3a] shrink-0" />

        {/* Right panel */}
        <div className="w-[465px] h-full flex flex-col shrink-0">
          <div className="h-[21px] bg-[#3a3a3a] flex items-end pl-[3px] gap-[1px] text-[12px] shrink-0">
            <div className="w-[116px] h-[17px] border-t border-x border-[#2e2e2e] rounded-t-[3px] flex items-center justify-center text-[#8f8f8f]">Modeling Toolkit</div>
            <div className="w-[107px] h-[17px] bg-[#444444] rounded-t-[3px] flex items-center justify-center text-[#ececec]">Attribute Editor</div>
          </div>
          <div className="h-[30px] flex items-center shrink-0 pr-[12px]">
            <Menu cls="flex pl-[11px] gap-[13px] text-[12px]" items={["List", "Selected", "Focus", "Attributes", "Display", "Show", "Help"]} />
            <svg className="ml-auto" width="12" height="14" viewBox="0 0 12 14"><path d="M7 0L12 5 10 6 8 10 3.500 5.500 6 3ZM4 8L0 13" fill="#8d8d8d" stroke="#8d8d8d" /></svg>
          </div>
          <div className="flex-1 flex items-center justify-center text-[11.600px] font-medium text-[#cfcfcf] pb-[4px]">Select an object in the scene to view and edit its attributes</div>
          <div className="h-[26px] flex gap-[2px] pl-[4px] pr-[4px] mb-[4px] text-[12px] shrink-0">
            <div className="w-[149px] bg-[#4c4c4c] flex items-center justify-center text-[#777]">Select</div>
            <div className="w-[155px] bg-[#5a5a5a] flex items-center justify-center text-[#e2e2e2]">Load Attributes</div>
            <div className="w-[149px] bg-[#4c4c4c] flex items-center justify-center text-[#777]">Copy Tab</div>
          </div>
        </div>
      </div>

      {/* Help / command line */}
      <div className="h-[33px] flex items-center shrink-0 border-t-[1px] border-[#3a3a3a] text-[11px] pt-[1px]">
        <div className="ml-[14px] w-[15px] h-[15px] rounded-full bg-[#8aab35] flex items-center justify-center text-[#333] font-bold text-[12px]">?</div>
        <span className="ml-[9px] text-[#dcdcdc] w-[400px] whitespace-nowrap">Move Tool: Select an object to move.</span>
        <span className="ml-[549px] w-[26px] text-[12px] text-[#e6e6e6]">MEL</span>
        <div className="ml-[10px] w-[348px] h-[22px] bg-[#2e2e2e] rounded-[2px]" />
        <div className="ml-[9px] w-[507px] h-[20px] bg-[#2e2e2e] rounded-[2px]" />
        <div className="ml-[7px]">
          <svg width="18" height="18" viewBox="0 0 18 18"><rect width="18" height="18" fill="#c8c8c8" /><rect x="1" y="4" width="16" height="13" fill="#707070" /><text x="9" y="14" textAnchor="middle" fontFamily="Liberation Mono" fontWeight="700" fontSize="9" fill="#fff">{"{;}"}</text></svg>
        </div>
      </div>

      {/* Taskbar */}
      <div className="h-[50px] flex items-stretch shrink-0 bg-linear-to-r from-[#23363f] via-[#22333f] to-[#1f2e47] text-white">
        <div className="w-[60px] flex items-center justify-center">
          <svg width="20" height="20" viewBox="0 0 20 20" fill="#fff"><path d="M0 3L8.500 1.800V9.500H0ZM9.500 1.600L20 0V9.500H9.500ZM0 10.500H8.500V18.200L0 17ZM9.500 10.500H20V20L9.500 18.400Z" /></svg>
        </div>
        <div className="w-[360px] bg-[#f0f0f0] border-t-2 border-[#c9c9c9] flex items-center text-[#333] shrink-0">
          <svg className="ml-[14px]" width="20" height="22" viewBox="0 0 20 22" fill="none" stroke="#222" strokeWidth="1.500"><circle cx="12.500" cy="8" r="6.500" /><path d="M8 13L1 21" /></svg>
          <span className="ml-[16px] text-[18px] font-['Open_Sans',sans-serif] whitespace-nowrap leading-none">Type here to search</span>
          <svg className="ml-auto" width="95" height="50" viewBox="0 0 95 50">
            <rect x="0" y="42" width="95" height="8" fill="#f4d98f" />
            <rect x="8" y="40" width="87" height="3" fill="#dcb568" />
            <path d="M8 38C14 22 28 12 48 8 40 22 28 30 14 34Z" fill="#9c8260" />
            <path d="M5 42L30 20" stroke="#3a3a6a" />
            <path d="M30 34Q30 28 34 28V24H42V28Q48 28 48 34V44H30Z" fill="#5c5ba0" />
            <rect x="34" y="22" width="8" height="5" fill="#c9a16a" />
            <rect x="51" y="6" width="7" height="38" fill="#3c7d64" />
            <rect x="59" y="12" width="8" height="32" fill="#d98a35" />
            <rect x="68" y="6" width="7" height="38" fill="#b82e2e" />
            <rect x="76" y="10" width="7" height="34" fill="#3c7f86" />
          </svg>
        </div>
        <div className="w-[60px] flex items-center justify-center">
          <svg width="20" height="20" viewBox="0 0 20 20" fill="none" stroke="#fff"><path d="M1 1H13M3 1V4M11 1V4M1 4H13M1 7H13V15H1ZM1 18H13M3 18V19M11 18V19M17 1V6M17 12V19" /><rect x="15.500" y="7" width="3" height="3" fill="#fff" /></svg>
        </div>
        <div className="ml-[2px] w-[62px] flex items-center justify-center">
          <svg width="28" height="26" viewBox="0 0 28 26"><path d="M0 1H11L13 4H28V26H0Z" fill="#e0a50e" /><rect y="6" width="28" height="20" fill="#f5ce5c" /><path d="M6 26V16Q6 13 9 13H19Q22 13 22 16V26H18V18H10V26Z" fill="#3a9ce0" /></svg>
        </div>
        <div className="w-[62px] flex items-center justify-center">
          <svg width="30" height="32" viewBox="0 0 30 32"><rect x="0" y="7" width="30" height="25" rx="4" fill="#f3f3f3" /><path d="M8 8V1H22V8" fill="none" stroke="#2aa3e8" strokeWidth="2" /><rect x="7" y="12" width="7" height="7" fill="#f25022" /><rect x="15" y="12" width="7" height="7" fill="#7fba00" /><rect x="7" y="20" width="7" height="7" fill="#00a4ef" /><rect x="15" y="20" width="7" height="7" fill="#ffb900" /></svg>
        </div>
        <div className="w-[62px] flex items-center justify-center">
          <svg width="30" height="30" viewBox="0 0 30 30"><path d="M0 12L15 0 30 12V30H0Z" fill="#0e6fc2" /><path d="M0 12L15 22 30 12V30H0Z" fill="#37b4f2" /><path d="M4 11L15 5 26 11 15 19Z" fill="#fff" /></svg>
        </div>
        <div className="w-[62px] flex items-center justify-center border-b-[3px] border-[#7cb7e0]">
          <svg width="32" height="36" viewBox="0 0 32 36"><circle cx="17" cy="15" r="14" fill="#2bb6c9" /><path d="M3 15A14 14 0 0 1 30 11C24 5 10 7 11 18Z" fill="#57d38c" /><path d="M11 18C12 30 24 30 30 24 26 30 18 34 12 30Z" fill="#135fa8" /><circle cx="17" cy="18" r="6" fill="#23363f" /><circle cx="8" cy="26" r="8" fill="#9c9c9c" /><circle cx="8" cy="24" r="3" fill="#dcdcdc" /><path d="M2 32Q8 25 14 32Z" fill="#dcdcdc" /></svg>
        </div>
        <div className="w-[62px] flex items-center justify-center">
          <div className="w-[29px] h-[29px] bg-[#ee0f11] rounded-[6px] flex items-center justify-center">
            <svg width="11" height="12" viewBox="0 0 11 12"><path d="M1 0L11 6 1 12Z" fill="#fff" /></svg>
          </div>
        </div>
        <div className="w-[62px] flex items-center justify-center border-b-[3px] border-[#7cb7e0]">
          <div className="w-[28px] h-[32px] bg-[#1b2b05] rounded-[4px] flex items-center justify-center text-[#a6e22e] text-[18px] font-bold">Pt</div>
        </div>
        <div className="w-[61px] bg-[#466270] flex items-center justify-center border-b-[3px] border-[#7cb7e0]">
          <MayaLogo s={30} />
        </div>
        <div className="ml-auto flex items-center">
          <svg width="31" height="18" viewBox="0 0 31 18"><rect width="31" height="18" rx="2" fill="#d8d8d8" /><rect x="1.500" y="1.500" width="14" height="15" fill="#1f3b73" /><rect x="15.500" y="1.500" width="14" height="15" fill="#c8202f" /><path d="M12 17L15 8 19 5 22 7 21 11 24 17Z" fill="#fff" /></svg>
          <span className="ml-[10px] text-[#ef5d5d] text-[16px] font-['Open_Sans',sans-serif] w-[44px]">Live</span>
          <svg className="ml-[17px]" width="16" height="10" viewBox="0 0 16 10" fill="none" stroke="#fff" strokeWidth="1.300"><path d="M1 9L8 1 15 9" /></svg>
          <svg className="ml-[16px]" width="14" height="18" viewBox="0 0 14 18" fill="none" stroke="#fff"><rect x="1" y="3" width="8" height="12" rx="1" /><path d="M9 8L13 6V12L9 10M3 1H9M3 17H9" /></svg>
          <svg className="ml-[11px]" width="20" height="14" viewBox="0 0 20 14"><path d="M1 13Q0 8 4 7 5 2 10 2 15 2 16 6 20 7 20 13Z" fill="#e8e8e8" /></svg>
          <svg className="ml-[11px]" width="20" height="20" viewBox="0 0 20 20" fill="none" stroke="#fff"><path d="M1 4L19 1V17L1 19Z" /><path d="M7 8H12V12M7 12V15" /><circle cx="15" cy="16" r="3.500" fill="#f49b0b" stroke="none" /></svg>
          <svg className="ml-[10px]" width="20" height="16" viewBox="0 0 20 16" fill="none" stroke="#fff"><rect x="6" y="3" width="13" height="11" /><rect x="6" y="3" width="6" height="11" fill="#fff" /><path d="M2 0V4M5 0V4M1 4H6V8H3V13" /></svg>
          <svg className="ml-[12px]" width="18" height="18" viewBox="0 0 18 18" fill="none" stroke="#eee"><path d="M1 17Q1 5 13 1M5 17Q5 8 14 5M9 17Q9 11 15 9" /><circle cx="13" cy="15" r="1.500" fill="#eee" /></svg>
          <svg className="ml-[10px]" width="20" height="20" viewBox="0 0 20 20" fill="none" stroke="#fff"><path d="M1 7H5L10 2V18L5 13H1Z" /><path d="M12 7Q14 10 12 13M15 4Q18 10 15 16" /></svg>
          <svg className="ml-[12px]" width="22" height="22" viewBox="0 0 22 22" fill="none" stroke="#fff" strokeWidth="1.200"><path d="M4 20L16 3Q18 1 19 3T18 6L8 19Q5 22 4 20ZM12 4L9 10M14 8L16 10" /></svg>
          <div className="ml-[21px] w-[64px] flex flex-col items-center text-[14px] leading-[23px] font-['Open_Sans',sans-serif] text-[#f2f2f2] whitespace-nowrap">
            <span>2:18 PM</span>
            <span>6/13/2024</span>
          </div>
          <div className="ml-[24px] mr-[29px] relative w-[22px] h-[30px]">
            <svg width="20" height="24" viewBox="0 0 20 24"><rect x="1" y="4" width="18" height="17" fill="#fff" /><path d="M4 9H16M4 12H16M4 15H12" stroke="#23363f" /></svg>
            <div className="absolute left-[8px] top-[10px] w-[20px] h-[20px] rounded-full bg-[#3c3c3c] border border-[#aaa] flex items-center justify-center text-[13px] font-semibold leading-none">8</div>
          </div>
        </div>
      </div>
    </div>
  );
}
